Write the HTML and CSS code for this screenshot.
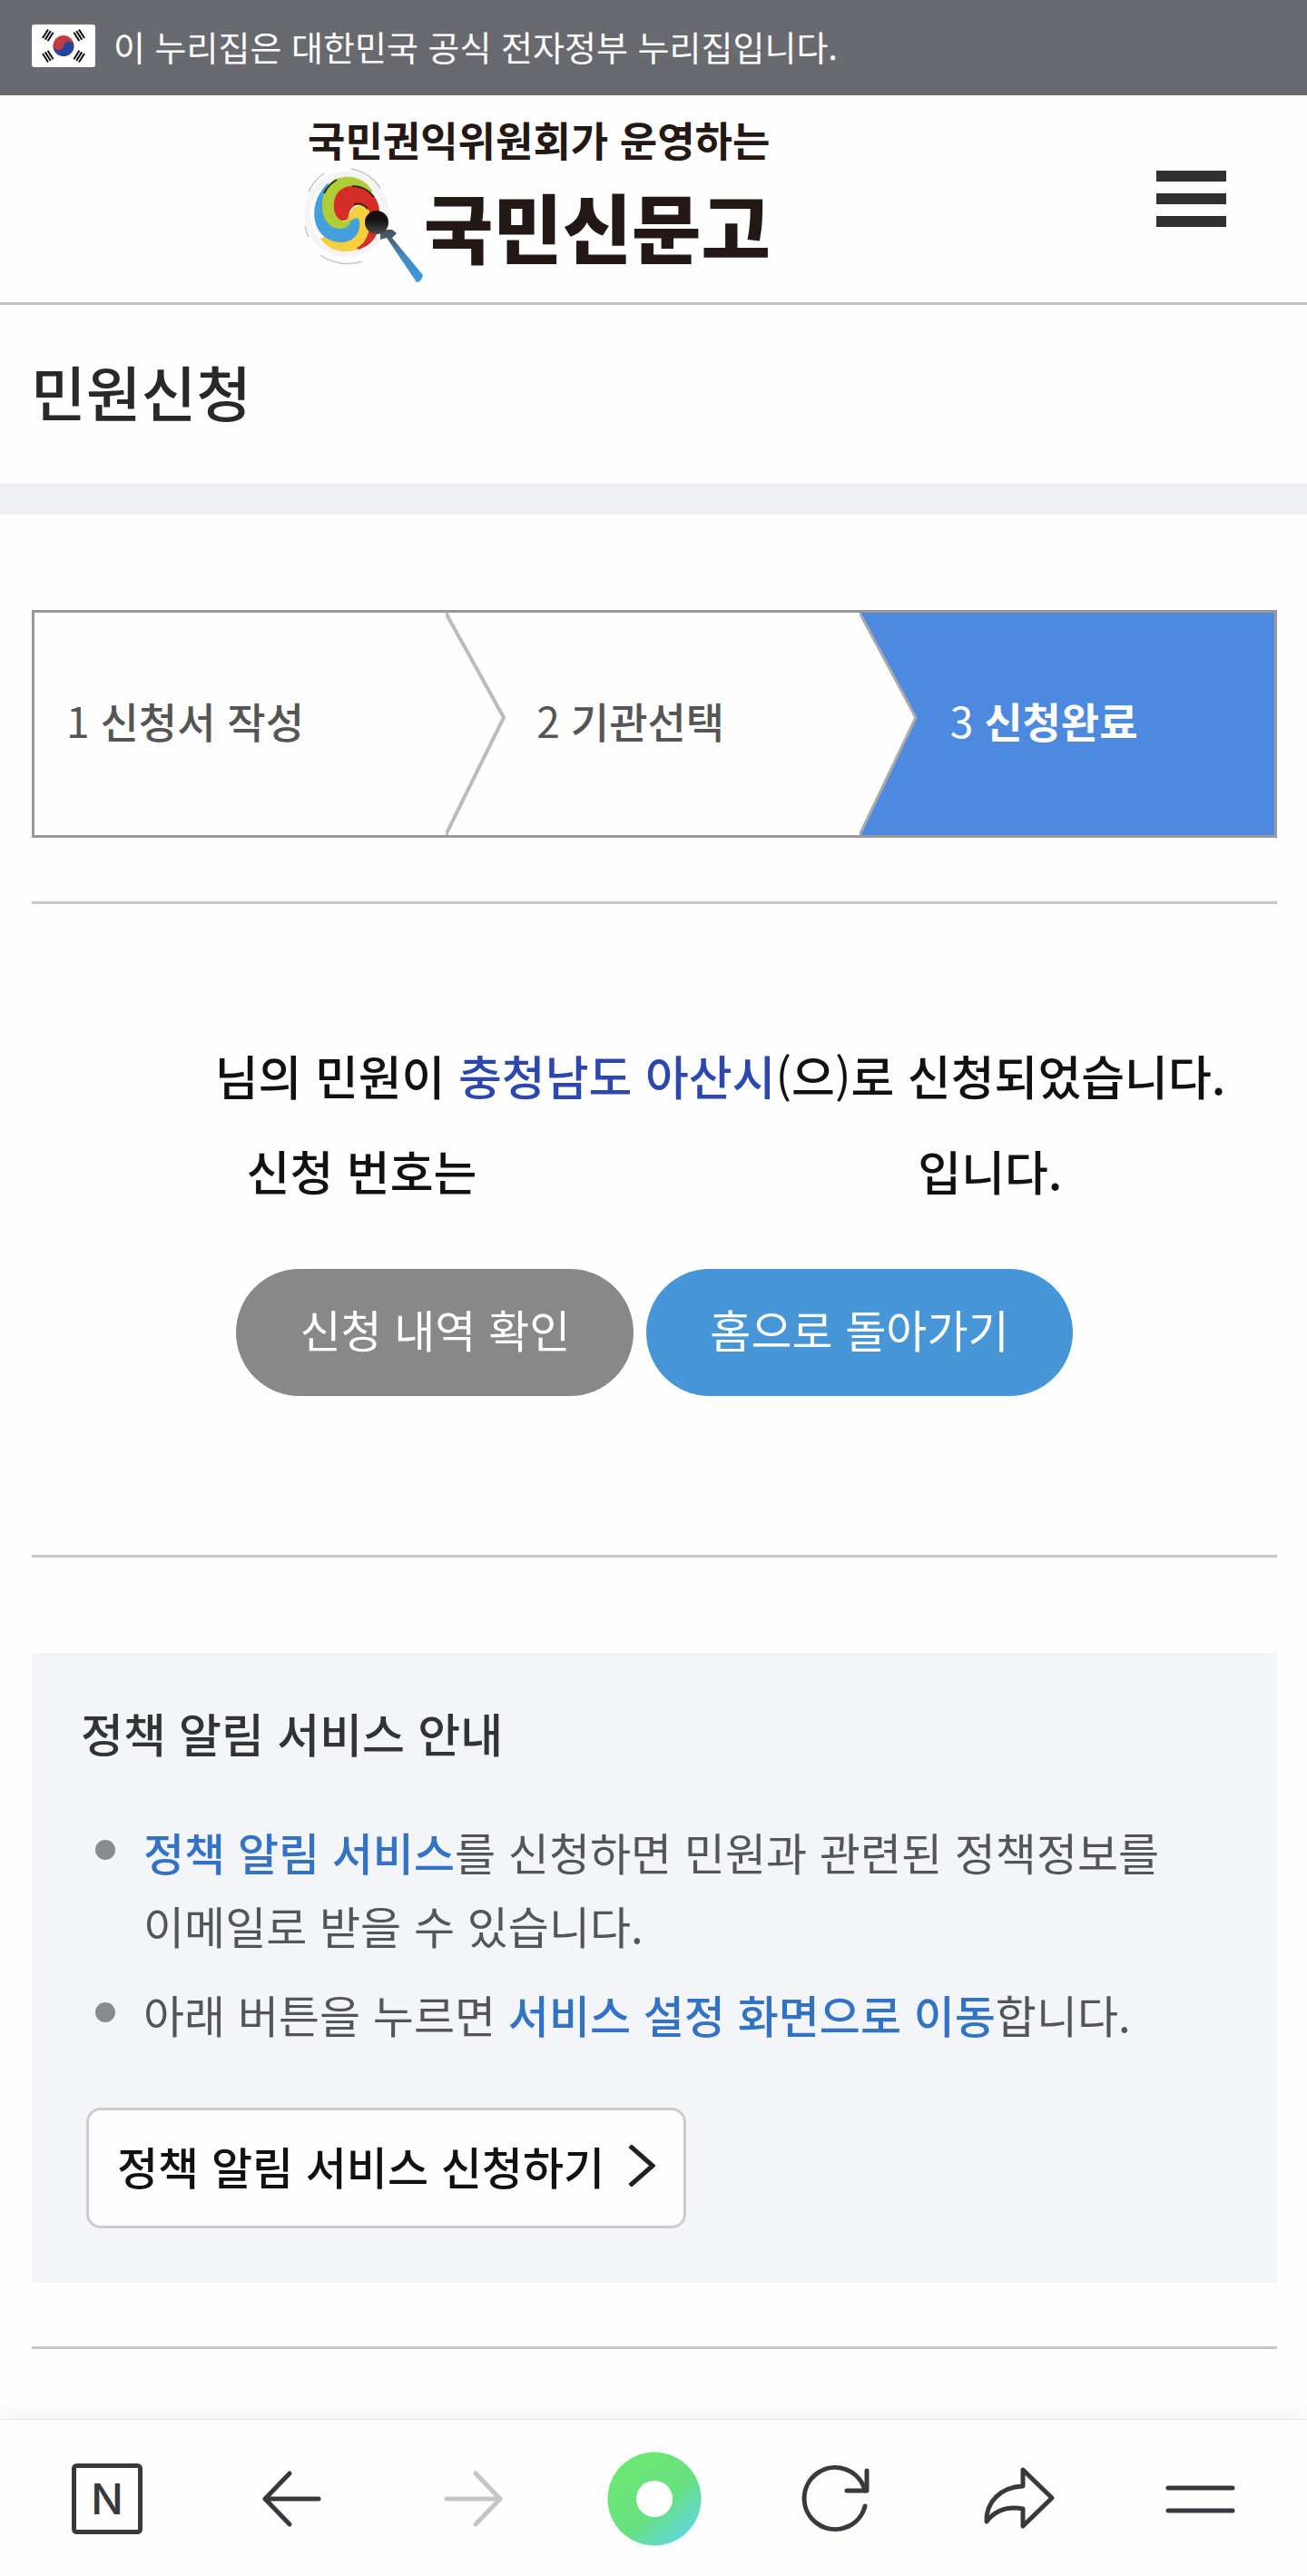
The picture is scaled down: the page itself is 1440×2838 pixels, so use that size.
FILE: index.html
```html
<!DOCTYPE html>
<html lang="ko">

<head>
  <meta charset="UTF-8" />
  <meta name="viewport" content="width=device-width, initial-scale=1.0" />
  <title>민원신청 - 국민신문고</title>
  <link rel="stylesheet" href="styles.css">
</head>

<body>
  <div class="gov-bar">
    <svg class="flag" viewBox="0 0 70 47" aria-hidden="true">
      <rect width="70" height="47" rx="3" fill="#fff" />
      <g transform="rotate(10 35 23.5)">
        <circle cx="35" cy="23.5" r="11.5" fill="#c43c40" />
        <path d="M23.5 23.5a5.75 5.75 0 0 0 11.5 0a5.75 5.75 0 0 1 11.5 0a11.5 11.5 0 0 1-23 0z" fill="#21469b" />
      </g>
      <g stroke="#111" stroke-width="2">
        <path d="M12 15l6-9.500M14.800 16.600l6-9.500M17.600 18.200l6-9.500" />
        <path d="M58 15l-6-9.500M55.200 16.600l-6-9.500M52.400 18.200l-6-9.500" />
        <path d="M12 32l6 9.500M14.800 30.400l6 9.500M17.600 28.800l6 9.500" />
        <path d="M58 32l-6 9.500M55.200 30.400l-6 9.500M52.400 28.800l-6 9.500" />
      </g>
    </svg>
    <span>이 누리집은 대한민국 공식 전자정부 누리집입니다.</span>
  </div>

  <header class="header">
    <a href="#" class="logo">
      <span class="logo-sub">국민권익위원회가 운영하는</span>
      <span class="logo-main">
        <svg class="emblem" viewBox="0 0 132 130" aria-hidden="true">
          <defs>
            <linearGradient id="stick" x1="0" y1="0" x2="0" y2="1">
              <stop offset="0" stop-color="#4a4f55" />
              <stop offset="0.5" stop-color="#4488bb" />
              <stop offset="1" stop-color="#3d9be0" />
            </linearGradient>
            <linearGradient id="ball" x1="0" y1="0" x2="0" y2="1">
              <stop offset="0.4" stop-color="#15100f" />
              <stop offset="1" stop-color="#4a4a4c" />
            </linearGradient>
          </defs>
          <circle cx="47" cy="53" r="47" fill="#f4f4f4" />
          <g fill="none" stroke="#c4c4c4" stroke-width="1.500">
            <path d="M5 28A52 52 0 0 1 22 8M52 3A52 52 0 0 1 84 24M18 98A52 52 0 0 0 64 105M1 66A52 52 0 0 0 5 78" />
          </g>
          <circle cx="47" cy="53" r="40" fill="#fff" />
          <path d="M52 50C56 42 66 41 72 46L76 76C69 89 58 94 46 94C34 94 25 89 18 80L40 70Z" fill="#f6cf3d" />
          <path d="M60 92C69 89 76 84 80 75L71 72C69 81 65 86 58 90Z" fill="#d42f28" />
          <path d="M27 18C15 29 9 45 12 60C15 76 28 84 41 84C54 84 63 74 61 60C60 56 56 57 52 60L38 66L22 50Z" fill="#449fdd" />
          <path d="M28 19C42 7 65 10 75 27L72 32L50 26L37 36L35 50L43 61C48 61 50 59 51 56C53 64 46 70 39 69C27 68 20 57 20 44C20 34 23 25 28 19Z" fill="#b0cc37" />
          <path d="M36 31C45 17 68 20 77 33C81 38 83 44 83 50L73 55C72 42 59 39 52 47C48 52 51 60 43 60C34 59 29 43 36 31Z" fill="#d62e27" />
          <path d="M22 30Q27 20 36 15M53 22Q68 22 77 34" fill="none" stroke="#2b2b20" stroke-width="2" />
          <path d="M55 42Q64 40 70 47" fill="none" stroke="#2b2b20" stroke-width="2" />
          <path d="M84 70L97 70L102 74L97 79L131 120Q129 128 124 128L91 79L84 81Z" fill="url(#stick)" />
          <circle cx="80" cy="62" r="13" fill="url(#ball)" />
        </svg>
        <span class="logo-name">국민신문고</span>
      </span>
    </a>
    <button type="button" class="menu-btn" aria-label="메뉴">
      <span></span>
      <span></span>
      <span></span>
    </button>
  </header>

  <h1 class="page-title">민원신청</h1>

  <main class="content">
    <ol class="steps">
      <li>1 <strong>신청서 작성</strong></li>
      <li>
        <svg class="step-arrow" viewBox="0 0 66 244" preserveAspectRatio="none" aria-hidden="true">
          <path d="M0 0L64 115L0 244" fill="#fefefe" stroke="#bbb" stroke-width="4" />
        </svg>
        2 <strong>기관선택</strong>
      </li>
      <li class="active">
        <svg class="step-arrow" viewBox="0 0 66 244" preserveAspectRatio="none" aria-hidden="true">
          <path d="M0 0L62 115L0 244" fill="#fefefe" stroke="#aaa" stroke-width="3" />
        </svg>
        3 <strong>신청완료</strong>
      </li>
    </ol>

    <section class="result">
      <p><span class="blank-name"></span>님의 민원이 <em>충청남도 아산시</em><span class="thin">(</span>으<span class="thin">)</span>로 신청되었습니다.</p>
      <p>신청 번호는<span class="blank-number"></span>입니다.</p>
      <div class="result-btns">
        <button type="button" class="btn btn-gray">신청 내역 확인</button>
        <button type="button" class="btn btn-blue">홈으로 돌아가기</button>
      </div>
    </section>

    <section class="notice">
      <h2>정책 알림 서비스 안내</h2>
      <ul>
        <li><strong>정책 알림 서비스</strong>를 신청하면 민원과 관련된 정책정보를 이메일로 받을 수 있습니다.</li>
        <li>아래 버튼을 누르면 <strong>서비스 설정 화면으로 이동</strong>합니다.</li>
      </ul>
      <a href="#" class="notice-link">
        정책 알림 서비스 신청하기
        <svg width="30" height="46" viewBox="0 0 30 46" aria-hidden="true">
          <path d="M2 1L27 23L2 45" fill="none" stroke="#222" stroke-width="5" />
        </svg>
      </a>
    </section>
  </main>

  <nav class="toolbar">
    <a href="#" aria-label="네이버 홈">
      <svg viewBox="0 0 104 104">
        <rect x="15.500" y="15.500" width="73" height="73" rx="3" fill="none" stroke="#37393e" stroke-width="5" />
        <text x="52" y="69" text-anchor="middle" class="naver-n">N</text>
      </svg>
    </a>
    <button type="button" aria-label="뒤로">
      <svg viewBox="0 0 104 104">
        <path d="M52 24L25 52L52 80M25 52H84" class="line" />
      </svg>
    </button>
    <button type="button" aria-label="앞으로" disabled>
      <svg viewBox="0 0 104 104">
        <path d="M56 24L83 52L56 80M83 52H24" class="line line-off" />
      </svg>
    </button>
    <button type="button" aria-label="그린닷">
      <svg viewBox="0 0 104 104">
        <defs>
          <linearGradient id="dot" x1="0.200" y1="0.100" x2="0.900" y2="0.900">
            <stop offset="0" stop-color="#6ce874" />
            <stop offset="0.550" stop-color="#68e07f" />
            <stop offset="1" stop-color="#5fd6e4" />
          </linearGradient>
        </defs>
        <circle cx="52" cy="52" r="51.500" fill="url(#dot)" />
        <circle cx="52" cy="52" r="20" fill="#fff" />
      </svg>
    </button>
    <button type="button" aria-label="새로고침">
      <svg viewBox="0 0 104 104">
        <path d="M83 60A34 34 0 1 1 83 43" class="line" />
        <path d="M85 21V43H63" class="line" />
      </svg>
    </button>
    <button type="button" aria-label="공유">
      <svg viewBox="0 0 104 104">
        <path d="M56 20L88 51L56 82V63C39 60 26 64 16 77C15 56 31 39 56 38Z" class="line" />
      </svg>
    </button>
    <button type="button" aria-label="더보기">
      <svg viewBox="0 0 104 104">
        <path d="M15 40H86M15 65H86" class="line" />
      </svg>
    </button>
  </nav>
</body>

</html>
```

FILE: styles.css
```css
* {
  box-sizing: border-box;
}

body {
  margin: 0;
  min-height: 100vh;
  display: flex;
  flex-direction: column;
  background: #fefefe;
  color: #111;
  font-family: "Noto Sans CJK KR", "Noto Sans", sans-serif;
  word-break: keep-all;
}

button {
  font-family: inherit;
  border: none;
  background: none;
  padding: 0;
  cursor: pointer;
}

.gov-bar {
  display: flex;
  align-items: center;
  gap: 20px;
  padding: 0 35px 4px;
  height: 105px;
  background: #696a6f;
  color: #fff;
  font-size: 38px;
}

.flag {
  width: 70px;
  height: 47px;
}

.header {
  display: flex;
  justify-content: space-between;
  align-items: center;
  padding: 22px 89px 22px 335px;
  height: 231px;
  border-bottom: 3px solid #c4c4c4;
}

.logo {
  display: flex;
  flex-direction: column;
  color: #231815;
  text-decoration: none;
}

.logo-sub {
  padding-left: 4px;
  font-size: 45px;
  font-weight: 700;
  line-height: 58px;
}

.logo-main {
  display: flex;
  align-items: center;
}

.emblem {
  width: 132px;
  height: 130px;
}

.logo-name {
  font-size: 83px;
  font-weight: 900;
  line-height: 120px;
}

.menu-btn {
  display: flex;
  flex-direction: column;
  gap: 13px;
  width: 77px;
}

.menu-btn span {
  height: 12px;
  background: #303030;
}

.page-title {
  margin: 0;
  padding: 46px 34px 54px;
  border-bottom: 35px solid #eff0f4;
  color: #292929;
  font-size: 66px;
  font-weight: 500;
  line-height: 96px;
}

.content {
  padding: 105px 33px 77px 35px;
}

.steps {
  display: grid;
  grid-template-columns: repeat(3, 1fr);
  margin: 0;
  padding: 0;
  height: 251px;
  border: 3px solid #999;
  list-style: none;
  color: #555;
  font-size: 46px;
}

.steps li {
  position: relative;
  display: flex;
  align-items: center;
  gap: 12px;
  padding: 0 0 10px 98px;
}

.steps li:first-child {
  padding-left: 35px;
}

.steps strong {
  font-weight: 500;
}

.steps .active {
  background: #4d8adf;
  color: #fff;
}

.steps .active strong {
  font-weight: 700;
}

/* arrow lies over the left edge of its step */
.step-arrow {
  position: absolute;
  left: -2px;
  top: 0;
  width: 66px;
  height: 100%;
}

.result {
  margin-top: 70px;
  padding: 136px 0 175px;
  border-top: 3px solid #c6c8ca;
  border-bottom: 3px solid #c6c8ca;
  text-align: center;
  font-size: 52px;
  font-weight: 500;
}

.result p {
  margin: 0;
  line-height: 105px;
}

.result em {
  color: #2c48b0;
  font-style: normal;
}

.thin {
  font-weight: 400;
}

.blank-name {
  display: inline-block;
  width: 145px;
}

.blank-number {
  display: inline-block;
  width: 486px;
}

.result-btns {
  display: flex;
  justify-content: center;
  gap: 14px;
  margin-top: 56px;
}

.btn {
  height: 140px;
  padding: 0 70px 10px;
  border-radius: 70px;
  color: #fff;
  font-size: 49px;
}

.btn-gray {
  background: #888;
}

.btn-blue {
  background: #4796d7;
}

.notice {
  margin-top: 105px;
  padding: 50px 54px 60px;
  background: #f3f5f9;
}

.notice h2 {
  margin: 0;
  color: #333;
  font-size: 51px;
  font-weight: 500;
  line-height: 76px;
}

.notice ul {
  margin: 52px 0 63px;
  padding: 0;
  list-style: none;
  color: #555;
  font-size: 49px;
  line-height: 81px;
}

.notice li {
  position: relative;
  padding-left: 69px;
}

.notice li + li {
  margin-top: 17px;
}

.notice li::before {
  content: "";
  position: absolute;
  left: 16px;
  top: 28px;
  width: 22px;
  height: 22px;
  border-radius: 50%;
  background: #8a8b90;
}

.notice li strong {
  color: #3273c5;
  font-weight: 500;
}

.notice-link {
  display: inline-flex;
  align-items: center;
  gap: 26px;
  height: 133px;
  margin-left: 6px;
  padding: 0 31px 6px;
  border: 3px solid #ccc;
  border-radius: 16px;
  background: #fefefe;
  color: #111;
  font-size: 49px;
  font-weight: 500;
  text-decoration: none;
}

.content::after {
  content: "";
  display: block;
  margin-top: 70px;
  border-top: 3px solid #c4c8cc;
}

.toolbar {
  display: grid;
  grid-template-columns: repeat(7, 1fr);
  align-items: center;
  margin-top: auto;
  padding: 0 16px 0 18px;
  height: 174px;
  border-top: 1px solid #e4e5e7;
  background: #fefefe;
  box-shadow: 0 -8px 16px #f5f6f8;
}

.toolbar a,
.toolbar button {
  display: flex;
  justify-content: center;
}

.toolbar svg {
  width: 104px;
  height: 104px;
}

.line {
  fill: none;
  stroke: #37393e;
  stroke-width: 5;
  stroke-linecap: round;
  stroke-linejoin: round;
}

.line-off {
  stroke: #c5c5c7;
}

.naver-n {
  fill: #37393e;
  font-family: Inter, sans-serif;
  font-size: 47px;
  font-weight: 500;
}
```
